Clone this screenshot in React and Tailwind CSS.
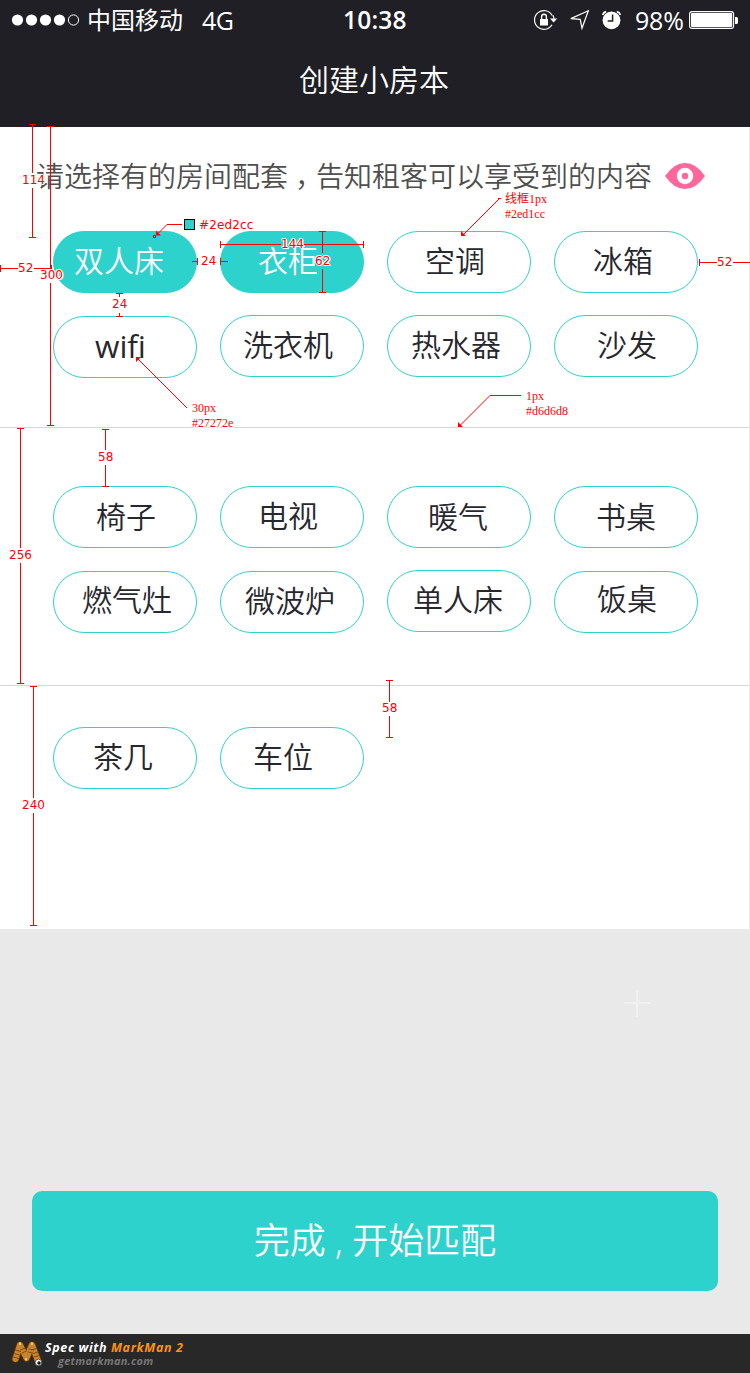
const GROUPS = [
  {
    box: 'h-[301px] pt-[104px] border-b border-[#d6d6d8]',
    rows: [
      [
        { name: '双人床', on: true, text: 'left-[20px] top-[-1px]' },
        { name: '衣柜', on: true, text: 'left-[37px] top-[-1px]' },
        { name: '空调', text: 'left-[37px] top-[-1px]' },
        { name: '冰箱', text: 'left-[38px] top-[-1px]' },
      ],
      [
        { name: 'wifi', pill: 'mt-px', text: 'left-[41px] top-[-1px] text-[31.5px] font-normal' },
        { name: '洗衣机', text: 'left-[22px] top-[-1px]' },
        { name: '热水器', text: 'left-[23px] top-[-1px]' },
        { name: '沙发', text: 'left-[42px] top-[-1px]' },
      ],
    ],
  },
  {
    box: 'h-[258px] pt-[58px] border-b border-[#d6d6d8]',
    rows: [
      [
        { name: '椅子', text: 'left-[42px] top-[0px]' },
        { name: '电视', text: 'left-[37px] top-[-1px]' },
        { name: '暖气', text: 'left-[40px] top-[0px]' },
        { name: '书桌', text: 'left-[41px] top-[0px]' },
      ],
      [
        { name: '燃气灶', pill: 'mt-px', text: 'left-[28px] top-[-2px]' },
        { name: '微波炉', pill: 'mt-px', text: 'left-[24px] top-[-1px]' },
        { name: '单人床', text: 'left-[25px] top-[-1px]' },
        { name: '饭桌', pill: 'mt-px', text: 'left-[42px] top-[-3px]' },
      ],
    ],
  },
  {
    box: 'h-[243px] pt-[41px]',
    rows: [
      [
        { name: '茶几', text: 'left-[39px] top-[-1px]' },
        { name: '车位', text: 'left-[32px] top-[-1px]' },
      ],
    ],
  },
];

const MEASURES = [
  { t: '114', c: 'left-[22px] top-[172px]' },
  { t: '300', c: 'left-[40px] top-[267px]' },
  { t: '52', c: 'left-[18px] top-[260px]' },
  { t: '24', c: 'left-[201px] top-[253px]' },
  { t: '144', c: 'left-[281px] top-[236px]' },
  { t: '62', c: 'left-[315px] top-[253px]' },
  { t: '24', c: 'left-[112px] top-[296px]' },
  { t: '52', c: 'left-[717px] top-[254px]' },
  { t: '58', c: 'left-[98px] top-[449px]' },
  { t: '256', c: 'left-[9px] top-[547px]' },
  { t: '240', c: 'left-[22px] top-[797px]' },
  { t: '58', c: 'left-[382px] top-[700px]' },
  { t: '#2ed2cc', c: 'left-[199px] top-[217px] tracking-[0.15px]' },
];

const NOTES = [
  { t: ['线框1px', '#2ed1cc'], c: 'left-[505px] top-[192px]' },
  { t: ['30px', '#27272e'], c: 'left-[192px] top-[401px]' },
  { t: ['1px', '#d6d6d8'], c: 'left-[526px] top-[389px]' },
];

const HALO = '[text-shadow:1px_0_#fff,-1px_0_#fff,0_1px_#fff,0_-1px_#fff,1px_1px_#fff,-1px_-1px_#fff]';

function StatusBar() {
  return (
    <div className="flex h-10 items-center text-white">
      <svg className="ml-[11px] h-3 w-[70px]" viewBox="0 0 70 12" fill="#fff">
        <circle cx="6.5" cy="6" r="5.6" />
        <circle cx="20.5" cy="6" r="5.6" />
        <circle cx="34.5" cy="6" r="5.6" />
        <circle cx="48.5" cy="6" r="5.6" />
        <circle cx="62.5" cy="6" r="5.1" fill="none" stroke="#fff" />
      </svg>
      <span className="ml-[6px] w-[115px] text-[24px] leading-10">中国移动</span>
      <span className="w-[141px] text-[25px] leading-10 tracking-[-0.5px]">4G</span>
      <span className="w-[190px] text-[24.5px] font-semibold leading-10 tracking-[0.2px]">10:38</span>
      <svg className="h-6 w-[90px]" viewBox="533 8 90 24" fill="none" stroke="#fff" strokeWidth="1.2">
        <path d="M552.2 15.5A9.4 9.4 0 1 0 552 24.8" />
        <path d="M552.8 15.3q1 1.600 1.100 3.500" />
        <path d="M550 18.6h7.200l-3.600 4z" fill="#fff" stroke="none" />
        <path d="M540 19h8v6.5h-8z" fill="#fff" stroke="none" />
        <path d="M541.6 19v-2.2a2.4 2.6 0 0 1 4.8 0V19" strokeWidth="1.4" />
        <path d="M588.3 10.8L570.8 18.6L580.2 19.3L582 28.2Z" />
        <circle cx="611.5" cy="20.3" r="8.9" fill="#fff" stroke="none" />
        <path d="M612.6 14.5v6.4h-4.9" stroke="#201f25" strokeWidth="1.5" />
        <path d="M602.7 15q.7-2.8 3.5-3.4M616.8 11.6q2.8.6 3.6 3.4" strokeWidth="1.6" />
      </svg>
      <span className="ml-[12px] w-[54px] text-[25px] leading-10 tracking-[-0.2px]">98%</span>
      <svg className="h-[18px] w-[50px]" viewBox="689 11 50 18">
        <rect x="689.6" y="11.6" width="44" height="16.8" rx="2.5" fill="none" stroke="#fff" strokeWidth="1.1" />
        <rect x="691" y="13" width="41.2" height="14" rx="1" fill="#fff" />
        <path d="M735 17h1.5q1.5 0 1.5 1.5v4q0 1.5-1.5 1.5H735z" fill="#fff" />
      </svg>
    </div>
  );
}

function Pill({ name, on, pill = '', text }) {
  return (
    <div
      className={`flex h-[62px] w-[144px] items-center rounded-full border border-[#2ed2cc] text-[30px] ${
        on ? 'bg-[#2ed2cc] text-white' : 'text-[#27272e]'
      } ${pill}`}
    >
      <span className={`relative whitespace-nowrap leading-[60px] ${text}`}>{name}</span>
    </div>
  );
}

function Annotations() {
  return (
    <div className="pointer-events-none absolute inset-0 text-[#f00]">
      <svg className="absolute inset-0 h-[1373px] w-[750px]" viewBox="0 0 750 1373" fill="none" stroke="#f00">
        <g shapeRendering="crispEdges">
          <path d="M29 124.5h7M32.500 124V173M32.500 188V238M29 237.500h7" />
          <path d="M47 126.500h7M50.500 126V268M50.500 283V426M47 425.500h7" />
          <path d="M0.500 265v7M0 268.500h18M34 268.500h17M51.500 265v4" />
          <path d="M192 261.500h5M197.500 258v7M220.500 258v7M221 261.500h7" />
          <path d="M220.500 241v7M220 244.500h61M304 244.500h60M363.500 241v7" />
          <path d="M319 231.500h7M322.500 231V253M322.500 269V293M319 292.500h7" />
          <path d="M116 293.500h7M119.500 293v4M119.500 313v4M116 316.500h7" />
          <path d="M699.500 259v7M699 262.500h18M733 262.500h17" />
          <path d="M102 429.500h7M105.500 429V450M105.500 465V487M102 486.500h7" />
          <path d="M17 428.500h7M20.500 428V548M20.500 563V684M17 683.500h7" />
          <path d="M30 686.500h7M33.500 686V798M33.500 813V926M30 925.500h7" />
          <path d="M386 680.500h7M389.500 680V702M389.500 716V738M386 737.500h7" />
          <path d="M167 224.500h15M498 198.500h3M490 395.500h31" />
          <rect x="153.500" y="235.500" width="2" height="2" />
          <rect x="184.500" y="219.500" width="10" height="10" fill="#2ed2cc" stroke="#000" />
        </g>
        <path d="M167 224.500L158 233.500M499.500 198.500L463 235M187 408L138 359M490 395.500L460 425.500" />
        <path d="M156 230.500v5h5zM461 231v5h5zM136 357h5l-5 5zM458 422v5h5z" fill="#f00" stroke="none" />
      </svg>
      {MEASURES.map((m, i) => (
        <span key={i} className={`absolute whitespace-nowrap font-['DejaVu_Sans',sans-serif] text-[12px] leading-4 ${HALO} ${m.c}`}>
          {m.t}
        </span>
      ))}
      {NOTES.map((n, i) => (
        <div
          key={i}
          className={`absolute flex flex-col whitespace-nowrap font-['Liberation_Serif','Noto_Sans_CJK_SC',serif] text-[12px] leading-[15px] ${HALO} ${n.c}`}
        >
          {n.t.map((line) => (
            <span key={line}>{line}</span>
          ))}
        </div>
      ))}
    </div>
  );
}

function MarkManLogo() {
  return (
    <svg className="ml-[11px] h-[30px] w-[34px]" viewBox="11 1340 34 30" fill="none" strokeLinecap="round">
      <path d="M15.500 1360L20 1346L26.500 1359L32 1346L38 1362" stroke="#633506" strokeWidth="7.500" strokeLinejoin="round" />
      <path d="M15.500 1360L20 1346L26.500 1359L32 1346L38 1362" stroke="#c9852c" strokeWidth="6" strokeLinejoin="round" />
      <path
        d="M13.500 1358l5 1.500M14.500 1354.500l5 1.500M15.500 1351l5 1.500M20.500 1351l4.500-2M22 1354l4.500-2M28 1353l4.500 1M29 1350l4.500 1M31.500 1351l5-1.500M33 1354.500l5-1.500M34 1358l5-1.500"
        stroke="#7d470d"
        strokeWidth=".9"
      />
      <path d="M20 1344.500v.5M32 1344.500v.5M26 1360v.5" stroke="#f4d28a" strokeWidth="2" />
      <circle cx="38.500" cy="1363.500" r="3.300" fill="#fff" stroke="#333" strokeWidth=".7" />
      <circle cx="39" cy="1364" r="1.700" fill="#111" />
    </svg>
  );
}

export default function App() {
  return (
    <div className="relative flex h-[1373px] w-[750px] flex-col overflow-hidden bg-[#e9e9e9] font-['Open_Sans','Noto_Sans_CJK_SC',sans-serif]">
      <header className="h-[127px] bg-[#201f25]">
        <StatusBar />
        <h1 className="relative right-px pt-[17px] text-center text-[30px] leading-[46px] font-[350] text-white">创建小房本</h1>
      </header>
      <main className="relative w-[749px] bg-white font-[350]">
        <div className="absolute left-[36px] top-[28px] flex items-center">
          <p className="w-[629px] whitespace-nowrap text-[28px] leading-[42px] text-[#4f4f4f]">
            请选择有的房间配套<span className="relative left-[7px]">，</span>告知租客可以享受到的内容
          </p>
          <svg className="h-[26px] w-[40px]" viewBox="0 0 40 26">
            <path d="M0 13Q9 0 20 0T40 13Q31 26 20 26T0 13Z" fill="#ff6699" />
            <circle cx="20" cy="13" r="5.700" fill="none" stroke="#fff" strokeWidth="5" />
          </svg>
        </div>
        {GROUPS.map((g, i) => (
          <section key={i} className={`flex flex-col gap-[22px] pl-[53px] ${g.box}`}>
            {g.rows.map((row, r) => (
              <div key={r} className="flex h-[62px] items-start gap-[23px]">
                {row.map((item) => (
                  <Pill key={item.name} {...item} />
                ))}
              </div>
            ))}
          </section>
        ))}
      </main>
      <div className="flex h-[262px] justify-end pr-[99px] pt-[61px]">
        <svg className="h-[27px] w-[27px]" viewBox="0 0 27 27" stroke="#f1f1f1" strokeWidth="2">
          <path d="M0 13H27M13 0V27" />
        </svg>
      </div>
      <button className="mx-8 h-[100px] shrink-0 rounded-[10px] bg-[#2ed2cc] text-[36px] font-[350] leading-[100px] text-white">
        完成 , 开始匹配
      </button>
      <footer className="mt-[43px] flex h-[39px] shrink-0 items-center bg-[#282828]">
        <MarkManLogo />
        <div className="flex flex-col text-[12.5px] font-bold italic leading-[13px] tracking-[0.62px]">
          <span className="whitespace-nowrap text-white">
            Spec with <span className="text-[#ff9210]">MarkMan 2</span>
          </span>
          <span className="ml-[13px] text-[11px] tracking-[0.25px] text-[#777]">getmarkman.com</span>
        </div>
      </footer>
      <Annotations />
    </div>
  );
}
